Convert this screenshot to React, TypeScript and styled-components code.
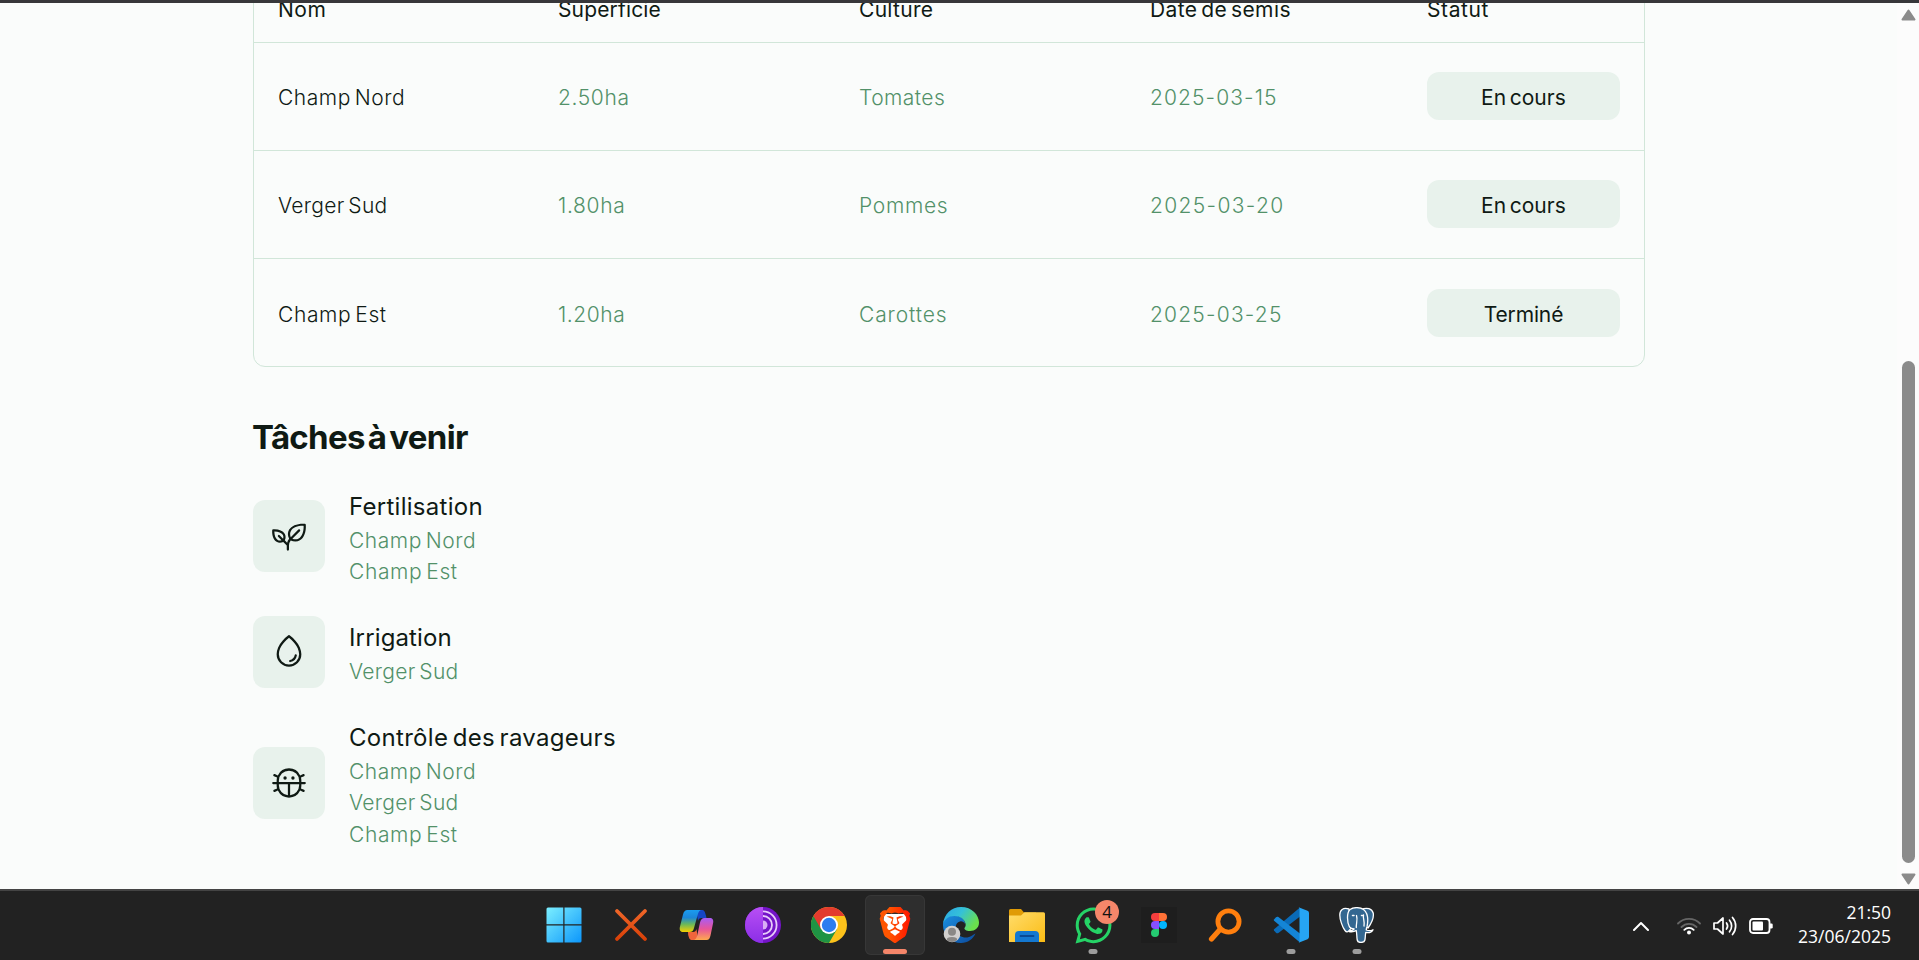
import React from 'react';
import styled, { createGlobalStyle, css } from 'styled-components';
import { PiPlant, PiDrop, PiBug } from 'react-icons/pi';
import { SiBrave } from 'react-icons/si';
import { FaWhatsapp } from 'react-icons/fa';

const GlobalStyle = createGlobalStyle`
  * { box-sizing: border-box; }
  html, body { margin: 0; padding: 0; overflow: hidden; }
  body { font-family: Inter, "Liberation Sans", sans-serif; color: #0f1a14; }
`;

const ink = '#0f1a14';
const green = '#529169';
const line = '#d1e6d9';
const tint = '#e8f2ec';

const Screen = styled.div`
  width: 1919px;
  height: 960px;
  display: flex;
  flex-direction: column;
  overflow: hidden;
  background: #fafcfb;
`;

const WindowEdge = styled.div`
  flex: none;
  height: 3px;
  background: #37373a;
`;

const Viewport = styled.div`
  flex: 1;
  min-height: 0;
  display: flex;
  overflow: hidden;
`;

const Page = styled.main`
  flex: 1;
  padding-left: 253px;
  overflow: hidden;
`;

const Scrollbar = styled.div`
  flex: none;
  width: 22px;
  background: #fcfcfc;
  display: flex;
  flex-direction: column;
  align-items: center;
  padding: 6px 3px 4px 4px;
`;

const Thumb = styled.div`
  flex: none;
  width: 13px;
  height: 502px;
  margin-top: 340px;
  margin-bottom: 10px;
  border-radius: 7px;
  background: #8b8b8b;
`;

const Table = styled.section`
  width: 1392px;
  margin-top: -30px;
  border: 1px solid ${line};
  border-radius: 12px;
  overflow: hidden;
`;

const columns = css`
  display: grid;
  grid-template-columns: 280px 301px 291px 277px 241px;
  align-items: center;
`;

const HeadRow = styled.div`
  ${columns}
  height: 69px;
  border-bottom: 1px solid ${line};
`;

const Row = styled.div`
  ${columns}
  height: 108px;
  padding-bottom: 1px;
  border-bottom: 1px solid ${line};
  &:last-child {
    height: 107px;
    padding: 1px 0 0;
    border-bottom: 0;
  }
`;

const Cell = styled.div`
  padding: 0 24px;
`;

const Label = styled.span<{ $size?: number; $weight?: number; $color?: string; $ls: number; $lh?: number }>`
  display: block;
  width: fit-content;
  margin: 2px 0 -2px;
  white-space: nowrap;
  font-size: ${(p) => p.$size ?? 21}px;
  font-weight: ${(p) => p.$weight ?? 350};
  line-height: ${(p) => p.$lh ?? 32}px;
  letter-spacing: ${(p) => p.$ls}px;
  word-spacing: -2.500px;
  color: ${(p) => p.$color ?? ink};
`;

const Badge = styled.div`
  height: 48px;
  border-radius: 12px;
  background: ${tint};
  display: flex;
  align-items: center;
  justify-content: center;
`;

const Heading = styled.h2`
  margin: 0 0 0 -1px;
  padding: 51px 0 18px;
  height: 107.5px;
  font-size: 33px;
  line-height: 38px;
  font-weight: 700;
  letter-spacing: -0.7px;
  word-spacing: -4px;
  width: fit-content;
`;

const Task = styled.div`
  display: flex;
  align-items: center;
  gap: 24px;
  min-height: 108px;
  padding: 12px 0;
`;

const Tile = styled.div`
  width: 72px;
  height: 72px;
  border-radius: 12px;
  background: ${tint};
  display: flex;
  align-items: center;
  justify-content: center;
  font-size: 36px;
`;

const Taskbar = styled.footer`
  flex: none;
  height: 71px;
  display: flex;
  justify-content: space-between;
  background: #222;
  border-top: 2px solid #444;
  padding-left: 535px;
`;

const Apps = styled.div`
  display: flex;
  gap: 6px;
  padding-top: 4px;
`;

const AppSlot = styled.div<{ $active?: boolean; $nudge?: number }>`
  position: relative;
  width: 60px;
  height: 60px;
  padding-right: ${(p) => p.$nudge ?? 0}px;
  border-radius: 6px;
  display: flex;
  align-items: center;
  justify-content: center;
  ${(p) => p.$active && 'background: #2e2e2e; box-shadow: inset 0 0 0 1px #373737;'}
  svg { display: block; }
`;

const Indicator = styled.i<{ $active?: boolean }>`
  position: absolute;
  bottom: 1px;
  left: 50%;
  transform: translateX(-50%);
  width: ${(p) => (p.$active ? 24 : 9)}px;
  height: 5px;
  border-radius: 3px;
  background: ${(p) => (p.$active ? '#f5866a' : '#9d9d9d')};
`;

const Count = styled.b`
  position: absolute;
  left: 32px;
  top: 5px;
  width: 24px;
  height: 24px;
  border-radius: 50%;
  background: #f5866a;
  color: #111;
  font: 400 17px/24px "Open Sans", sans-serif;
  text-align: center;
`;

const Tray = styled.div`
  display: flex;
  align-items: center;
  height: 69px;
  padding-right: 28px;
`;

const TrayIcons = styled.div`
  display: flex;
  align-items: center;
  gap: 12px;
  margin: 0 24px 0 28px;
`;

const Clock = styled.div`
  font: 400 17.500px/24px "Open Sans", sans-serif;
  color: #fff;
  text-align: right;
  width: 94px;
  white-space: nowrap;
  padding-bottom: 3px;
`;

const WindowsLogo = () => (
  <svg width="36" height="36" viewBox="0 0 36 36">
    <defs>
      <linearGradient id="win" x1="0" y1="0" x2="1" y2="1">
        <stop offset="0" stopColor="#7df0ff" />
        <stop offset="1" stopColor="#0a95fb" />
      </linearGradient>
      <mask id="panes">
        <path fill="#fff" d="M2 .5h15.300v16.800H.5V2A1.500 1.500 0 0 1 2 .5zM18.500 .5H34A1.500 1.500 0 0 1 35.500 2v15.300h-17zM.5 18.500h16.800v17H2A1.500 1.500 0 0 1 .5 34zM18.500 18.500h17V34a1.500 1.500 0 0 1-1.500 1.500H18.500z" />
      </mask>
    </defs>
    <rect width="36" height="36" fill="url(#win)" mask="url(#panes)" />
  </svg>
);

const CrossLogo = () => (
  <svg width="36" height="36" viewBox="0 0 36 36">
    <defs>
      <linearGradient id="cross" x1="0" y1="0" x2="0" y2="36" gradientUnits="userSpaceOnUse">
        <stop offset="0" stopColor="#f26a2c" />
        <stop offset="1" stopColor="#d63c04" />
      </linearGradient>
    </defs>
    <path d="M4 4l28 28M32 4L4 32" stroke="url(#cross)" strokeWidth="3.800" strokeLinecap="round" />
  </svg>
);

const CopilotLogo = () => (
  <svg width="36" height="36" viewBox="0 0 36 36">
    <defs>
      <linearGradient id="cpa" x1="0" y1="0" x2="0" y2="1">
        <stop offset="0" stopColor="#1a9cf0" />
        <stop offset=".35" stopColor="#1c86d8" />
        <stop offset=".65" stopColor="#6bb85a" />
        <stop offset="1" stopColor="#f5d000" />
      </linearGradient>
      <linearGradient id="cpb" x1="0" y1="0" x2="0" y2="1">
        <stop offset="0" stopColor="#a85cf5" />
        <stop offset=".5" stopColor="#e8559a" />
        <stop offset="1" stopColor="#ffa94d" />
      </linearGradient>
    </defs>
    <path d="M17 3h5.500c3 0 3.500 2 4.300 5l.7 3h-5c-2 0-3 1-3.500 3z" fill="#1546c4" />
    <path d="M19 33h-5.500c-3 0-3.500-2-4.300-5L9 25h5c2 0 3-1 3.500-3z" fill="#f0653c" />
    <path d="M8.500 3H23c-2.500 0-3.500 2-4.200 4.500L15 21c-.8 3-2 4-4.500 4H4c-3 0-3.800-2.500-3-5.500l3-12C4.800 4.500 6 3 8.500 3z" fill="url(#cpa)" />
    <path d="M27.500 33H14c2.500 0 3.500-2 4.200-4.500L21 15.500c.8-3 2-4.500 4.500-4.500H31c3 0 3.800 2.500 3 5.500l-2.500 12c-.8 3-1.500 4.500-4 4.500z" fill="url(#cpb)" />
  </svg>
);

const TorLogo = () => (
  <svg width="36" height="36" viewBox="0 0 36 36">
    <defs>
      <linearGradient id="tor" x1="0" y1="0" x2="0" y2="1">
        <stop offset="0" stopColor="#b84ff5" />
        <stop offset="1" stopColor="#8b2ee6" />
      </linearGradient>
    </defs>
    <circle cx="18" cy="18" r="18" fill="#7414c8" />
    <path d="M18 0a18 18 0 0 0 0 36z" fill="url(#tor)" />
    <g fill="none" stroke="#e7cdfa" strokeWidth="1.800">
      <path d="M18 4.400a13.600 13.600 0 0 1 0 27.200" />
      <path d="M18 9a9 9 0 0 1 0 18" />
    </g>
    <path d="M18 13.500a4.500 4.500 0 0 1 0 9z" fill="#d9aef5" />
  </svg>
);

const ChromeLogo = () => (
  <svg width="36" height="36" viewBox="0 0 36 36">
    <circle cx="18" cy="18" r="18" fill="#fcc21b" />
    <path d="M2.410 9A18 18 0 0 0 18 36l7.800-13.500L18 18z" fill="#1f9444" />
    <path d="M2.410 9A18 18 0 0 1 33.590 9H18l-7.800 13.500z" fill="#e33b2e" />
    <circle cx="18" cy="18" r="9" fill="#fff" />
    <circle cx="18" cy="18" r="7.200" fill="#2d7df0" />
  </svg>
);

const BraveLogo = () => (
  <svg width="36" height="36" viewBox="0 0 36 36">
    <defs>
      <linearGradient id="brv" x1="0" y1="0" x2="1" y2="0">
        <stop offset=".3" stopColor="#ff5500" />
        <stop offset="1" stopColor="#ff1500" />
      </linearGradient>
    </defs>
    <path d="M7 7h22l1 12-4 8-8 5-8-5-4-8z" fill="#fff" />
    <SiBrave size={36} fill="url(#brv)" />
  </svg>
);

const EdgeLogo = () => (
  <svg width="36" height="36" viewBox="0 0 36 36">
    <defs>
      <linearGradient id="edt" x1="0" y1="0" x2="1" y2=".5">
        <stop offset="0" stopColor="#2aa6e8" />
        <stop offset=".5" stopColor="#35c1d8" />
        <stop offset="1" stopColor="#6ae04c" />
      </linearGradient>
      <linearGradient id="edb" x1="0" y1="0" x2="1" y2="1">
        <stop offset="0" stopColor="#1b8fe0" />
        <stop offset="1" stopColor="#0c4a9c" />
      </linearGradient>
    </defs>
    <path d="M0 18C0 12 5 8.500 11 8.500c7 0 11 4 11 8.500-1-2-3-3-5-2.500-4 1-5 5-4 9 1.500 5.500 8 8.500 13 6.500 3-1 4.500-2.500 6.500-3.500C30 32 25 36 18 36 8 36 0 28 0 18z" fill="url(#edb)" />
    <path d="M0 17C1 7 8.500 0 18 0c11 0 18 8 18 15.500 0 5.500-4 8.500-9 8.500-4 0-6-1.500-5.500-3 1-1.200 1.500-2.500 1-4.500C21.500 12 17 9 11.500 9 5.500 9 1.500 12.500 0 17z" fill="url(#edt)" />
    <circle cx="9" cy="27" r="8.300" fill="#d2d0ce" />
    <circle cx="9" cy="24.800" r="4" fill="#8a8886" />
    <path d="M3.800 33c0-2.200 1.500-3 5.200-3s5.200.8 5.200 3A8.300 8.300 0 0 1 9 35c-2 0-3.800-.7-5.200-2z" fill="#8a8886" />
  </svg>
);

const FolderLogo = () => (
  <svg width="36" height="36" viewBox="0 0 36 36">
    <defs>
      <linearGradient id="fld" x1="0" y1="0" x2="1" y2="1">
        <stop offset="0" stopColor="#ffdc6b" />
        <stop offset="1" stopColor="#fbbc14" />
      </linearGradient>
    </defs>
    <path d="M0 3.500A1.500 1.500 0 0 1 1.500 2H12l3 3.500h12V14H0z" fill="#e09b06" />
    <path d="M0 8.500h12l3.500-3.300H34.500A1.500 1.500 0 0 1 36 6.700V35H0z" fill="url(#fld)" />
    <path d="M6 35v-7a4 4 0 0 1 4-4h16a4 4 0 0 1 4 4v7z" fill="#1478d0" />
    <path d="M11.500 29h13" stroke="#0a4a94" strokeWidth="1.800" strokeLinecap="round" />
  </svg>
);

const FigmaLogo = () => (
  <svg width="36" height="36" viewBox="0 0 36 36">
    <rect width="36" height="36" fill="#1e1e1e" />
    <path d="M18 6h-4a4 4 0 0 0 0 8h4z" fill="#f53e3e" />
    <path d="M18 6h4a4 4 0 0 1 0 8h-4z" fill="#ff7237" />
    <path d="M18 14h-4a4 4 0 0 0 0 8h4z" fill="#874fff" />
    <circle cx="22" cy="18" r="4" fill="#00b6ff" />
    <path d="M18 22h-4a4 4 0 1 0 4 4z" fill="#24cb71" />
  </svg>
);

const SearchLogo = () => (
  <svg width="36" height="36" viewBox="0 0 36 36">
    <g fill="none" stroke="#ff7f0e" strokeLinecap="round">
      <circle cx="21.500" cy="14.500" r="10.600" strokeWidth="4.800" />
      <path d="M13 22.500L4.500 32" strokeWidth="5.200" />
    </g>
  </svg>
);

const CodeLogo = () => (
  <svg width="36" height="36" viewBox="0 0 36 36">
    <path d="M1 23.500l2 2.200c.8.800 1.600.8 2.400.2L27 9.500V.5L.8 22.400z" fill="#0a6bb8" />
    <path d="M1 12.500l2-2.200c.8-.8 1.600-.8 2.400-.2L27 26.500v9L.8 13.600z" fill="#1485d6" />
    <path d="M25.500 .2L34.500 3.800A2.500 2.500 0 0 1 36 6v24a2.500 2.500 0 0 1-1.500 2.200L25.500 35.800c1-.5 1-1 1-2.500V2.700c0-1.500 0-2-1-2.500z" fill="#26a5f3" />
  </svg>
);

const PostgresLogo = () => (
  <svg width="36" height="36" viewBox="0 0 36 36" fill="#336791" stroke="#fff" strokeWidth="1.300" strokeLinejoin="round" strokeLinecap="round">
    <path d="M10 2C4 .3.8 2.800.8 8c0 4.500 2.500 12 5.200 15.500 1.500 2 3 1.500 4.500-.3l2.500-3z" />
    <path d="M22 2.500C28 0 33 1.500 34.200 6c.8 4-2 10.500-5.200 15l-4-2z" />
    <path d="M10.500 20C8 15 7.500 6 11 2.500c3.500-2.500 10-2.500 13.500 0 4.500 3.500 5 10 3.500 17.500-.8 1-.5 2-.8 3 2 .8 4.500 1 6.800-.3-1 2.300-4 3.300-7.300 2.800-.5 3-.3 5-.8 7.500-.6 3-7 3.500-7.700 0-.5-3-.3-7-1-9.500-1.200.8-4.200 1.500-7.200 1 1.500-1.500 4-.5 5.200-2.500-2-.2-3.500-.7-4.700-2z" />
    <path d="M17.500 8.500c1.500 4-.5 8-.2 12M24.500 8c-.8 3.500 1.500 6.500.5 11" fill="none" />
    <path d="M13.500 8.600h1.500M22.500 8.400h1" strokeWidth="1.500" />
  </svg>
);

const ArrowUp = () => (
  <svg width="15" height="12" viewBox="0 0 15 12">
    <path d="M7.500 1.500L13.500 10.500H1.500z" fill="#8b8b8b" stroke="#8b8b8b" strokeWidth="2" strokeLinejoin="round" />
  </svg>
);
const ArrowDown = () => (
  <svg width="15" height="12" viewBox="0 0 15 12">
    <path d="M7.500 10.500L13.500 1.500H1.500z" fill="#8b8b8b" stroke="#8b8b8b" strokeWidth="2" strokeLinejoin="round" />
  </svg>
);

/* Tracking, in pixels, that each label is set with. */
const tracking: Record<string, number> = {
  'Nom': 0.5,
  'Superficie': 0.15,
  'Culture': 0.3,
  'Date de semis': 0.4,
  'Statut': 0.6,
  'Champ Nord': 0.55,
  'Champ Est': 0.62,
  'Verger Sud': 0.3,
  '2.50ha': 0.62,
  '1.80ha': 0.65,
  '1.20ha': 0.55,
  'Tomates': 0.45,
  'Pommes': 0.7,
  'Carottes': 0.9,
  '2025-03-15': 1.1,
  '2025-03-20': 1.35,
  '2025-03-25': 1.2,
  'En cours': 0.05,
  'Terminé': -0.15,
  'Fertilisation': 0.28,
  'Irrigation': 0.14,
  'Contrôle des ravageurs': 0.3,
};

type TextProps = { children: string; size?: number; weight?: number; color?: string; lh?: number };
const Text = ({ children, size, weight, color, lh }: TextProps) => (
  <Label $size={size} $weight={weight} $color={color} $lh={lh} $ls={tracking[children] ?? 0}>
    {children}
  </Label>
);

const fields = [
  { name: 'Champ Nord', area: '2.50ha', crop: 'Tomates', date: '2025-03-15', status: 'En cours' },
  { name: 'Verger Sud', area: '1.80ha', crop: 'Pommes', date: '2025-03-20', status: 'En cours' },
  { name: 'Champ Est', area: '1.20ha', crop: 'Carottes', date: '2025-03-25', status: 'Terminé' },
];
const heads = ['Nom', 'Superficie', 'Culture', 'Date de semis', 'Statut'];
const tasks = [
  { title: 'Fertilisation', icon: <PiPlant />, places: ['Champ Nord', 'Champ Est'] },
  { title: 'Irrigation', icon: <PiDrop />, places: ['Verger Sud'] },
  { title: 'Contrôle des ravageurs', icon: <PiBug />, places: ['Champ Nord', 'Verger Sud', 'Champ Est'] },
];

export default function App() {
  return (
    <Screen>
      <GlobalStyle />
      <WindowEdge />
      <Viewport>
        <Page>
          <Table>
            <HeadRow>
              {heads.map((h) => (
                <Cell key={h}><Text weight={420}>{h}</Text></Cell>
              ))}
            </HeadRow>
            {fields.map((f) => (
              <Row key={f.name}>
                <Cell><Text>{f.name}</Text></Cell>
                <Cell><Text color={green}>{f.area}</Text></Cell>
                <Cell><Text color={green}>{f.crop}</Text></Cell>
                <Cell><Text color={green}>{f.date}</Text></Cell>
                <Cell><Badge><Text weight={420}>{f.status}</Text></Badge></Cell>
              </Row>
            ))}
          </Table>
          <Heading>Tâches à venir</Heading>
          {tasks.map((t) => (
            <Task key={t.title}>
              <Tile>{t.icon}</Tile>
              <div>
                <Text size={24} weight={420} lh={36}>{t.title}</Text>
                {t.places.map((p) => (
                  <Text key={p} color={green} lh={31.5}>{p}</Text>
                ))}
              </div>
            </Task>
          ))}
        </Page>
        <Scrollbar><ArrowUp /><Thumb /><ArrowDown /></Scrollbar>
      </Viewport>
      <Taskbar>
        <Apps>
          <AppSlot $nudge={3}><WindowsLogo /></AppSlot>
          <AppSlot><CrossLogo /></AppSlot>
          <AppSlot><CopilotLogo /></AppSlot>
          <AppSlot><TorLogo /></AppSlot>
          <AppSlot><ChromeLogo /></AppSlot>
          <AppSlot $active><BraveLogo /><Indicator $active /></AppSlot>
          <AppSlot><EdgeLogo /></AppSlot>
          <AppSlot><FolderLogo /></AppSlot>
          <AppSlot><FaWhatsapp size={41} color="#25d366" /><Count>4</Count><Indicator /></AppSlot>
          <AppSlot><FigmaLogo /></AppSlot>
          <AppSlot><SearchLogo /></AppSlot>
          <AppSlot><CodeLogo /><Indicator /></AppSlot>
          <AppSlot><PostgresLogo /><Indicator /></AppSlot>
        </Apps>
        <Tray>
          <svg width="16" height="10" viewBox="0 0 16 10"><path d="M1 9l7-7 7 7" fill="none" stroke="#fff" strokeWidth="2" strokeLinecap="round" strokeLinejoin="round" /></svg>
          <TrayIcons>
            <svg width="24" height="18" viewBox="0 0 24 18" fill="none" strokeLinecap="round" strokeWidth="1.800">
              <path d="M1 6.500a15.500 15.500 0 0 1 22 0M4.500 10a10.600 10.600 0 0 1 15 0" stroke="#666" />
              <path d="M7.300 12.800a6.600 6.600 0 0 1 9.400 0" stroke="#fff" />
              <circle cx="12" cy="15.500" r="2" fill="#fff" />
            </svg>
            <svg width="24" height="20" viewBox="0 0 24 20" fill="none" stroke="#fff" strokeWidth="1.700" strokeLinecap="round" strokeLinejoin="round">
              <path d="M1 7h3.500L10 2v16l-5.500-5H1z" />
              <path d="M13.500 7a5 5 0 0 1 0 6M16.500 4.200a9 9 0 0 1 0 11.600M19.500 1.500a13 13 0 0 1 0 17" />
            </svg>
            <svg width="24" height="16" viewBox="0 0 24 16">
              <rect x="1" y="1" width="19.500" height="14" rx="3" fill="none" stroke="#fff" strokeWidth="1.800" />
              <rect x="3.500" y="3.500" width="10.500" height="9" rx="1" fill="#fff" />
              <path d="M21 5.500h1.500a1.200 1.200 0 0 1 1.200 1.200v2.600a1.200 1.200 0 0 1-1.200 1.200H21z" fill="#fff" />
            </svg>
          </TrayIcons>
          <Clock>21:50<br />23/06/2025</Clock>
        </Tray>
      </Taskbar>
    </Screen>
  );
}
